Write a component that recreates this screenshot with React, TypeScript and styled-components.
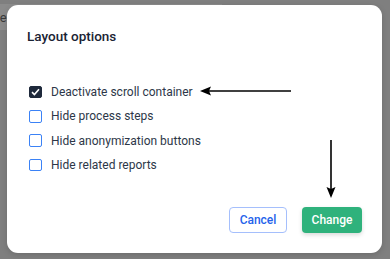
import React from "react";
import styled, { createGlobalStyle } from "styled-components";

const Global = createGlobalStyle`
  html, body { margin: 0; padding: 0; }
  body { font-family: Roboto, "Noto Sans", Arial, sans-serif; background: #7f7f7f; }
  * { box-sizing: border-box; }
`;

const Page = styled.div`
  position: relative;
  width: 390px;
  height: 259px;
  overflow: hidden;
  background: #7f7f7f;
`;

const BehindBar = styled.div`
  margin-top: 4px;
  width: 222px;
  height: 26px;
  background: #8b8b8b;
  display: flex;
  align-items: center;
  overflow: hidden;
`;

const BehindText = styled.span`
  margin-left: -21px;
  font-size: 13px;
  color: #3a3a3a;
`;

const Overlay = styled.div`
  position: absolute;
  inset: 0;
  padding: 5px 8px 6px 7px;
  display: flex;
`;

const Modal = styled.div`
  position: relative;
  flex: 1;
  background: #ffffff;
  border-radius: 11px;
  box-shadow: 0 2px 6px rgba(0, 0, 0, 0.15);
  display: flex;
  flex-direction: column;
  padding: 22px 20px 20px 20px;
`;

const Title = styled.h2`
  margin: 0;
  font-size: 13.5px;
  line-height: 18px;
  font-weight: 500;
  color: #1a2333;
`;

const Options = styled.div`
  margin-top: 35px;
  margin-left: 2px;
  display: flex;
  flex-direction: column;
`;

const Row = styled.label`
  display: flex;
  align-items: center;
  gap: 9.5px;
  height: 24.3px;
  font-size: 12px;
  color: #2d3748;
`;

const Box = styled.span<{ $checked?: boolean }>`
  width: 12.5px;
  height: 12.5px;
  border-radius: 2px;
  border: 1.5px solid ${(p) => (p.$checked ? "#1e293b" : "#3b82f6")};
  background: ${(p) => (p.$checked ? "#1e293b" : "#ffffff")};
  display: flex;
  align-items: center;
  justify-content: center;
  flex: none;
`;

const Footer = styled.div`
  margin-top: auto;
  display: flex;
  justify-content: flex-end;
  gap: 15px;
`;

const BaseButton = styled.button`
  height: 26px;
  border-radius: 4px;
  font-family: inherit;
  font-size: 12px;
  font-weight: 500;
  padding: 0;
  cursor: pointer;
`;

const CancelButton = styled(BaseButton)`
  width: 58px;
  background: #ffffff;
  color: #2563eb;
  border: 1.5px solid #a5bffc;
`;

const ChangeButton = styled(BaseButton)`
  width: 60px;
  background: #2fb27c;
  color: #ffffff;
  border: none;
  box-shadow: 0 2px 4px rgba(0, 0, 0, 0.15);
`;

const Arrow = styled.svg`
  position: absolute;
  overflow: visible;
`;

const options = [
  { label: "Deactivate scroll container", checked: true },
  { label: "Hide process steps", checked: false },
  { label: "Hide anonymization buttons", checked: false },
  { label: "Hide related reports", checked: false },
];

export default function App() {
  return (
    <Page>
      <Global />
      <BehindBar>
        <BehindText>Type</BehindText>
      </BehindBar>
      <Overlay>
        <Modal>
          <Title>Layout options</Title>
          <Options>
            {options.map((o) => (
              <Row key={o.label}>
                <Box $checked={o.checked}>
                  {o.checked && (
                    <svg width="9" height="8" viewBox="0 0 9 8">
                      <path d="M1 4.2 L3.4 6.5 L8 1.3" fill="none" stroke="#fff" strokeWidth="1.6" />
                    </svg>
                  )}
                </Box>
                {o.label}
              </Row>
            ))}
          </Options>
          <Footer>
            <CancelButton>Cancel</CancelButton>
            <ChangeButton>Change</ChangeButton>
          </Footer>
          <Arrow style={{ left: 193, top: 81 }} width="92" height="10" viewBox="0 0 92 10">
            <line x1="8" y1="5" x2="91" y2="5" stroke="#000" strokeWidth="1.6" />
            <path d="M0 5 L11 0.5 L9 5 L11 9.5 Z" fill="#000" />
          </Arrow>
          <Arrow style={{ left: 319, top: 135 }} width="10" height="58" viewBox="0 0 10 58">
            <line x1="5" y1="0" x2="5" y2="50" stroke="#000" strokeWidth="1.6" />
            <path d="M5 58 L0.5 47 L5 49 L9.5 47 Z" fill="#000" />
          </Arrow>
        </Modal>
      </Overlay>
    </Page>
  );
}
